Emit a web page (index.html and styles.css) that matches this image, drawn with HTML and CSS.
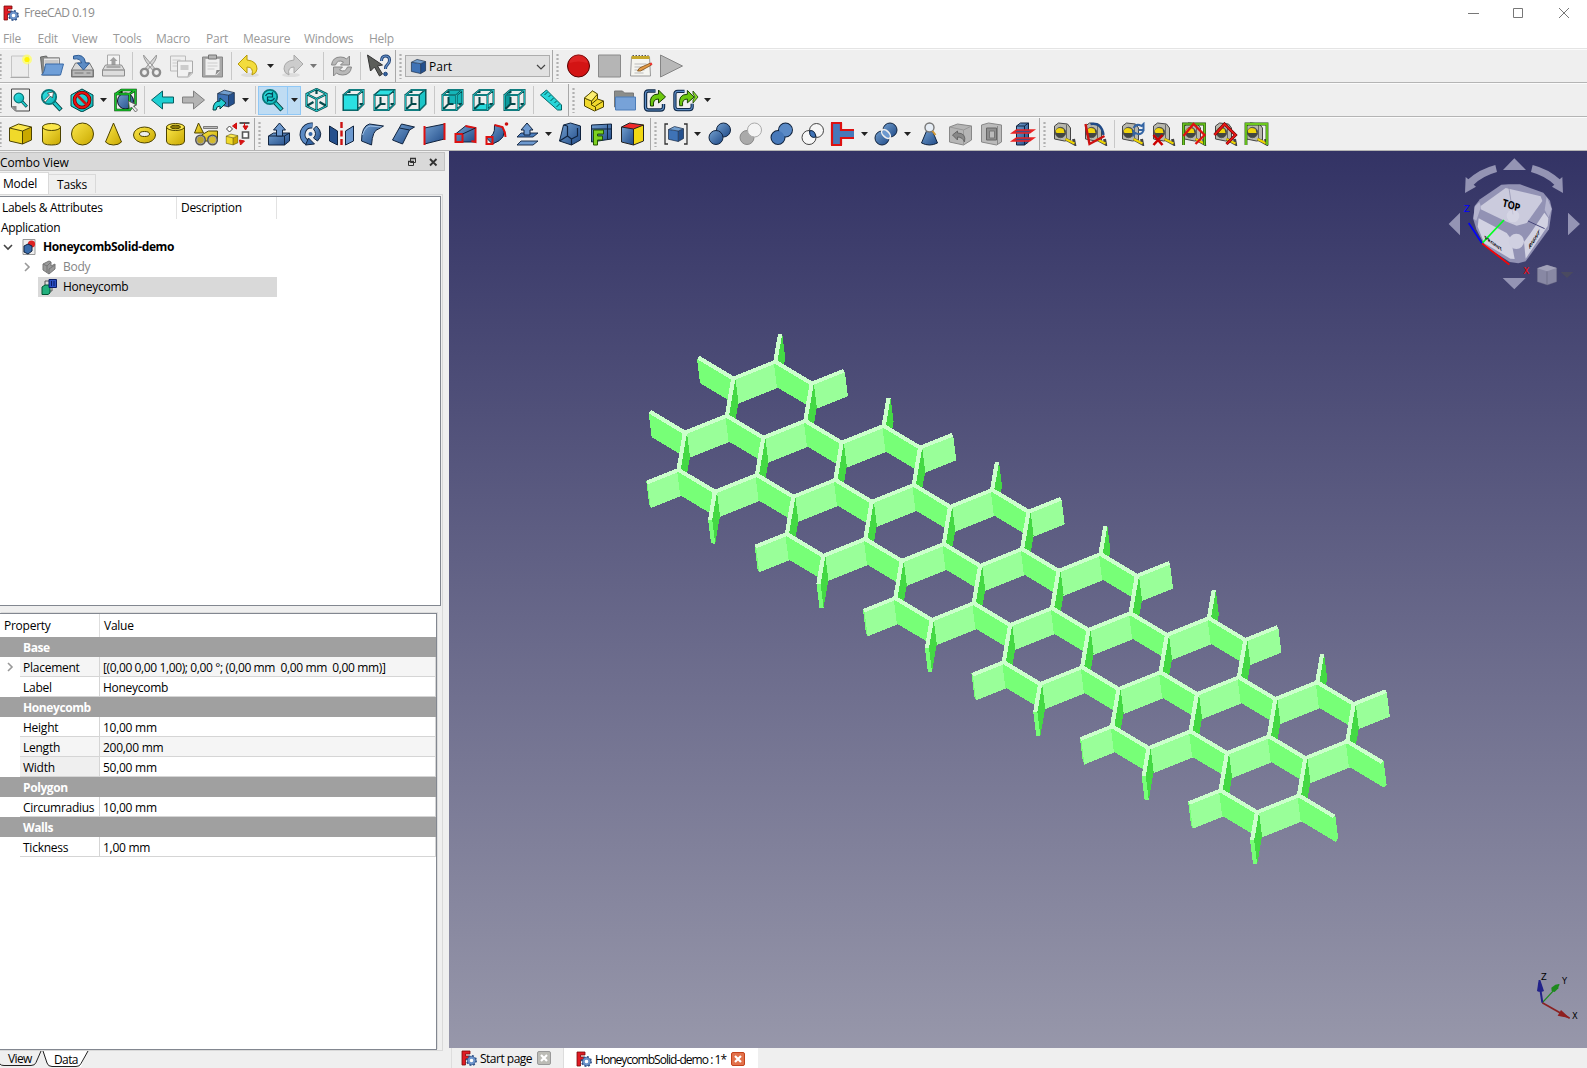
FILE: index.html
```html
<!DOCTYPE html>
<html lang="en">
<head>
<meta charset="utf-8">
<title>FreeCAD 0.19</title>
<link rel="stylesheet" href="styles.css">
</head>
<body>
<svg class="defs" width="0" height="0">
<defs>
<linearGradient id="gB" x1="0" y1="0" x2="1" y2="1"><stop offset="0" stop-color="#729fcf"/><stop offset="1" stop-color="#204a87"/></linearGradient>
<linearGradient id="gY" x1="0" y1="0" x2="1" y2="1"><stop offset="0" stop-color="#fbe74b"/><stop offset="1" stop-color="#c9a800"/></linearGradient>
<linearGradient id="gT" x1="0" y1="0" x2="1" y2="1"><stop offset="0" stop-color="#34e5e7"/><stop offset="1" stop-color="#0bb2b5"/></linearGradient>
<linearGradient id="gG" x1="0" y1="0" x2="1" y2="1"><stop offset="0" stop-color="#d2d2d2"/><stop offset="1" stop-color="#909090"/></linearGradient>
<linearGradient id="gS" x1="0" y1="0" x2="0" y2="1"><stop offset="0" stop-color="#333365"/><stop offset="1" stop-color="#9797aa"/></linearGradient>
</defs>
<symbol id="logo" viewBox="0 0 16 16"><path d="M1 1h8v3H4.500v2H8v3H4.500v6H1z" fill="#e01b24" stroke="#7a0a0a" stroke-width=".8"/><circle cx="10.500" cy="10.500" r="4.700" fill="none" stroke="#2b4f86" stroke-width="1.600" stroke-dasharray="1.845 1.845"/><circle cx="10.500" cy="10.500" r="3" fill="none" stroke="#6d95cc" stroke-width="2.400"/><circle cx="10.500" cy="10.500" r="4.200" fill="none" stroke="#2b4f86" stroke-width=".7"/><circle cx="10.500" cy="10.500" r="1.400" fill="#fff"/></symbol>
<symbol id="new" viewBox="0 0 24 24"><path d="M3 2h17v21H3z" fill="#ececec" stroke="#c4c4c4"/><path d="M2 23.500h19" stroke="#aaa"/><circle cx="18.500" cy="5.500" r="5" fill="#ffff66" opacity=".75"/><circle cx="18.500" cy="5.500" r="2.600" fill="#fff200"/></symbol>
<symbol id="open" viewBox="0 0 24 24"><path d="M1 3l6-1 1 2h12v17H3z" fill="#8a8c88" stroke="#666"/><path d="M4 4h16v9H4z" fill="#e8e8e8" stroke="#888"/><path d="M5 7h14M5 9h14" stroke="#aaa"/><path d="M6 10h18l-3 11H2q3-2 4-11z" fill="#6f9fd8" stroke="#3a6ba8"/></symbol>
<symbol id="save" viewBox="0 0 24 24"><path d="M5 9h14l4 7v7H1v-7z" fill="#d8d8d8" stroke="#777"/><path d="M1.500 16h21v6.500h-21z" fill="#b9b9b9" stroke="#777"/><path d="M4 19h9M16 19h4" stroke="#777"/><path d="M3 2q11-3 12 7h4l-6 7-6-7h4q-1-5-8-4z" fill="#5b8bc4" stroke="#2c5a94"/></symbol>
<symbol id="print" viewBox="0 0 24 24"><path d="M6 1h12v12H6z" fill="#f4f4f4" stroke="#aaa"/><path d="M12 3l4 4h-2v4h-4V7H8z" fill="#a0a0a0"/><path d="M4 11h16l3 5v6H1v-6z" fill="#ddd" stroke="#8c8c8c"/><path d="M1 16h22M5 13h14" stroke="#999" stroke-width="1.500"/></symbol>
<symbol id="cut" viewBox="0 0 24 24"><path d="M5 1q0 5 9 15l2-2zM18 1q1 5-9 15l-2-2z" fill="#d4d4d4" stroke="#999"/><circle cx="6" cy="18.500" r="3.600" fill="none" stroke="#8c8c8c" stroke-width="2.400"/><circle cx="18" cy="18.500" r="3.600" fill="none" stroke="#8c8c8c" stroke-width="2.400"/></symbol>
<symbol id="copy" viewBox="0 0 24 24"><path d="M1 2h15v15H1z" fill="#eee" stroke="#bbb"/><path d="M3 6h8M3 9h6M3 12h6" stroke="#ccc"/><path d="M8 7h15v12l-4 4H8z" fill="#f2f2f2" stroke="#aaa"/><path d="M11 11h8v5h-8z" fill="#ccc"/><path d="M18 23l1-5h4z" fill="#aaa"/></symbol>
<symbol id="paste" viewBox="0 0 24 24"><path d="M2 3h20v20H2z" fill="#a9a9a9" stroke="#888"/><path d="M5 5h14v13l-3 3H5z" fill="#f0f0f0"/><path d="M7 9h10M7 12h10M7 15h7" stroke="#ccc"/><path d="M8 1h8v4H8z" fill="#b5b5b5" stroke="#777"/><path d="M15 21l1-5h4z" fill="#888"/></symbol>
<symbol id="undo" viewBox="0 0 24 24"><ellipse cx="13" cy="21" rx="9" ry="2" fill="#ddd"/><path d="M1 10l9-9v5q10 1 10 9 0 4-5 6 2-8-5-8v6z" fill="#f3dc3c" stroke="#b79a0a"/></symbol>
<symbol id="redo" viewBox="0 0 24 24"><ellipse cx="11" cy="21" rx="9" ry="2" fill="#ddd"/><path d="M23 10l-9-9v5q-10 1-10 9 0 4 5 6-2-8 5-8v6z" fill="#ccc" stroke="#a8a8a8"/></symbol>
<symbol id="refresh" viewBox="0 0 24 24"><path d="M2 11q1-8 9-8 4 0 6 2l3-3v9h-9l3-3q-6-3-8 3zM22 13q-1 8-9 8-4 0-6-2l-3 3v-9h9l-3 3q6 3 8-3z" fill="#b9b9b9" stroke="#888"/></symbol>
<symbol id="what" viewBox="0 0 24 24"><path d="M1 1l3 16 4-4 5 9 3-2-5-8 5-1z" fill="#5c5e5a" stroke="#333"/><path d="M15 7q0-5 4-5 4 0 4 4 0 3-2 4.500T19 15" fill="none" stroke="#1c3f73" stroke-width="3"/><path d="M15 7q0-5 4-5 4 0 4 4 0 3-2 4.500T19 15" fill="none" stroke="#6d97cd" stroke-width="1.200"/><circle cx="19" cy="20" r="1.800" fill="#3465a4" stroke="#1c3f73"/></symbol>
<symbol id="cube" viewBox="0 0 24 24"><path d="M2 6l13 2v14L2 19z" fill="#3f73b6"/><path d="M15 8l7-3v13l-7 4z" fill="#24508d"/><path d="M2 6l8-4 12 3-7 3z" fill="#729fcf"/><path d="M2 6l8-4 12 3v13l-7 4-13-3zM2 6l13 2 7-3M15 8v14" fill="none" stroke="#10233e" stroke-width=".9"/></symbol>
<symbol id="ycube" viewBox="0 0 24 24"><path d="M1 6l13 3v13L1 19z" fill="#f0d92a"/><path d="M14 9l9-4v13l-9 4z" fill="#c9a800"/><path d="M1 6l9-4 13 3-9 4z" fill="#fce94f"/><path d="M1 6l9-4 13 3v13l-9 4-13-3zM1 6l13 3 9-4M14 9v13" fill="none" stroke="#4d4300"/></symbol>
<symbol id="rec" viewBox="0 0 24 24"><circle cx="12" cy="12" r="11" fill="#d31414" stroke="#500"/><path d="M3 9a9 9 0 0 1 18 0q-9-3-18 0z" fill="#f04040" opacity=".35"/></symbol>
<symbol id="stop" viewBox="0 0 24 24"><path d="M1 1h22v22H1z" fill="#b5b5b5" stroke="#8a8a8a"/></symbol>
<symbol id="note" viewBox="0 0 24 24"><path d="M3 3h18l1 19H2z" fill="#f5f5f0" stroke="#999"/><path d="M3 2h18v3H3z" fill="#c6a82a"/><path d="M4 1.500h16" stroke="#555" stroke-dasharray="1.500 1.500"/><path d="M6 10h12M6 13h8M6 16h10M6 19h9" stroke="#bbb"/><path d="M9 17l2-3L22 9l1 2-11 6z" fill="#e39a45" stroke="#7a4a10" stroke-width=".8"/><path d="M21 9.500l2-1 1 2-2 1z" fill="#e33"/></symbol>
<symbol id="play" viewBox="0 0 24 24"><path d="M1 1l22 11L1 23z" fill="#b8b8b8" stroke="#858585"/></symbol>
<symbol id="mag" viewBox="0 0 24 24"><path d="M14 14l7.500 8" stroke="#03393a" stroke-width="4.500"/><path d="M14 14l7 7.500" stroke="#1fc8ca" stroke-width="2.600"/><circle cx="9.500" cy="9" r="7.200" fill="url(#gT)" stroke="#06787a" stroke-width="1.800"/></symbol>
<symbol id="fit" viewBox="0 0 24 24"><path d="M3 1h18v22H7l-4-4z" fill="#eee" stroke="#444"/><path d="M3 18h5v5z" fill="#888"/><use href="#mag" x="4" y="4" width="16" height="16"/></symbol>
<symbol id="fitsel" viewBox="0 0 24 24"><use href="#mag" width="24" height="24"/><path d="M4 13l6-6-2-2 6-1-1 6-2-2-5 6z" fill="#fff" stroke="#333" stroke-width=".7"/></symbol>
<symbol id="draw" viewBox="0 0 24 24"><path d="M1 7l11-6 11 6v11l-11 6-11-6z" fill="url(#gT)" stroke="#044"/><circle cx="12" cy="12" r="7.500" fill="none" stroke="#600" stroke-width="3.600"/><circle cx="12" cy="12" r="7.500" fill="none" stroke="#e11" stroke-width="2.200"/><path d="M7 7l10 10" stroke="#c11" stroke-width="2.600"/></symbol>
<symbol id="bbox" viewBox="0 0 24 24"><circle cx="12" cy="13" r="8" fill="url(#gB)" stroke="#112"/><path d="M2 6h14v16H2zM2 6l6-4h14v14l-6 6M16 6l6-4M8 2v5" fill="none" stroke="#053b05" stroke-width="2.400"/><path d="M2 6h14v16H2zM2 6l6-4h14v14l-6 6M16 6l6-4" fill="none" stroke="#17c52c" stroke-width="1.300"/><path d="M15 13l1 8 2-2 4 5 2-2-4-4 3-1z" fill="#eee" stroke="#555" stroke-width=".8"/></symbol>
<symbol id="back" viewBox="0 0 24 24"><path d="M1 12L12 3v6h11v6H12v6z" fill="#1ecfd2" stroke="#065f61"/></symbol>
<symbol id="fwd" viewBox="0 0 24 24"><path d="M23 12L12 3v6H1v6h11v6z" fill="#b4b4b4" stroke="#808080"/></symbol>
<symbol id="link" viewBox="0 0 24 24"><use href="#cube" x="4" y="0" width="20" height="21"/><path d="M1 22q0-9 7-9v-3l6 5-6 6v-3q-4 0-4 4z" fill="#22cfd2" stroke="#053f40"/></symbol>
<symbol id="sync" viewBox="0 0 24 24"><use href="#mag" width="24" height="24"/><path d="M5 8q2-4 6-2l1-1v4H8M14 10q-2 4-6 2l-1 1v-4h4" fill="none" stroke="#045" stroke-width="1.200"/></symbol>
<symbol id="iso" viewBox="0 0 24 24"><path d="M12 1l10 5v12l-10 5-10-5V6zM2 6l10 5 10-5M12 11v12M12 1v5M2 18l7-4M22 18l-7-4" fill="none" stroke="#064a4c" stroke-width="2.200"/><path d="M12 1l10 5v12l-10 5-10-5V6zM2 6l10 5 10-5M12 11v12" fill="none" stroke="#2bd4d6" stroke-width=".8"/></symbol>
<symbol id="wire" viewBox="0 0 24 24"><path d="M2 7h14v15H2zM2 7l6-5h14v14l-6 6M16 7l6-5M8 2v3M8 9v7h5M18 16h4M8 16l-6 6" fill="none" stroke="#06494b" stroke-width="2"/><path d="M2 7h14v15H2zM2 7l6-5h14v14l-6 6M16 7l6-5" fill="none" stroke="#24ced1" stroke-width=".8"/></symbol>
<symbol id="vf" viewBox="0 0 24 24"><use href="#wire" width="24" height="24"/><path d="M2 7h14v15H2z" fill="#2be0e2" stroke="#06585a"/></symbol>
<symbol id="vt" viewBox="0 0 24 24"><use href="#wire" width="24" height="24"/><path d="M2 7l6-5h14l-6 5z" fill="#2be0e2" stroke="#06585a"/></symbol>
<symbol id="vr" viewBox="0 0 24 24"><use href="#wire" width="24" height="24"/><path d="M16 7l6-5v14l-6 6z" fill="#1bc5c8" stroke="#06585a"/></symbol>
<symbol id="vk" viewBox="0 0 24 24"><path d="M8 2h14v14H8z" fill="#15b5b8"/><use href="#wire" width="24" height="24"/></symbol>
<symbol id="vb" viewBox="0 0 24 24"><path d="M2 22l6-6h14l-6 6z" fill="#28dadc"/><use href="#wire" width="24" height="24"/></symbol>
<symbol id="vl" viewBox="0 0 24 24"><path d="M2 7l6-5v14l-6 6z" fill="#0d9a9c"/><use href="#wire" width="24" height="24"/></symbol>
<symbol id="ruler" viewBox="0 0 24 24"><path d="M1 7l6-5 15 15v5h-4z" fill="#26d5d8" stroke="#066"/><path d="M8 4l-3 3M11 7l-2 2M14 10l-3 3M17 13l-2 2M20 16l-3 3" stroke="#055"/></symbol>
<symbol id="part" viewBox="0 0 24 24"><path d="M3 10l8-7 5 3v5l6 2v6l-9 4-10-5z" fill="#f1d92c" stroke="#4d4300"/><path d="M3 10l7 3v4l4 2v4M10 13l6-7M14 18l8-5M10 16l6-5" fill="none" stroke="#4d4300"/><path d="M3 10l8-7 5 3-6 7z" fill="#fcee70" stroke="#4d4300" stroke-width=".8"/></symbol>
<symbol id="folder" viewBox="0 0 24 24"><path d="M2 3h8l2 2h9v14H2z" fill="#8b8d8a" stroke="#777"/><path d="M3 9h20v13H3z" fill="#77a2d8" stroke="#4d7db8"/></symbol>
<symbol id="exp" viewBox="0 0 24 24"><path d="M12 3H5Q2 3 2 6v13q0 3 3 3h12q3 0 3-3v-3" fill="none" stroke="#0d2747" stroke-width="3.400"/><path d="M12 3H5Q2 3 2 6v13q0 3 3 3h12q3 0 3-3v-3" fill="none" stroke="#5f8fc7" stroke-width="1.200"/><path d="M7 18q-2-12 8-12V2l7 7-7 6v-4q-6 0-5 7z" fill="#6cc80e" stroke="#173d02"/></symbol>
<symbol id="expl" viewBox="0 0 26 24"><use href="#exp" width="23" height="24"/><path d="M20 3l5 6-5 6v-3l2-3-2-3z" fill="#8de02b" stroke="#173d02" stroke-width=".8"/></symbol>
<symbol id="cyl" viewBox="0 0 24 24"><path d="M3 5v14q0 4 9 4t9-4V5z" fill="url(#gY)" stroke="#4d4300"/><ellipse cx="12" cy="5" rx="9" ry="3.500" fill="#fbe74b" stroke="#4d4300"/></symbol>
<symbol id="sph" viewBox="0 0 24 24"><circle cx="12" cy="12" r="11" fill="url(#gY)" stroke="#4d4300"/></symbol>
<symbol id="cone" viewBox="0 0 24 24"><path d="M12 1L4 20q3 3 8 3t8-3z" fill="url(#gY)" stroke="#4d4300"/></symbol>
<symbol id="torus" viewBox="0 0 24 24"><ellipse cx="12" cy="13" rx="11" ry="8" fill="url(#gY)" stroke="#4d4300"/><ellipse cx="12" cy="12" rx="5" ry="2.500" fill="#eee" stroke="#4d4300"/></symbol>
<symbol id="tube" viewBox="0 0 24 24"><use href="#cyl" width="24" height="24"/><ellipse cx="12" cy="5" rx="5" ry="1.800" fill="#8d7a00" stroke="#4d4300"/></symbol>
<symbol id="prim" viewBox="0 0 24 24"><path d="M4 1L0 11h9z" fill="url(#gY)" stroke="#4d4300"/><path d="M9 4.500h14v2H9z" fill="#bbb" stroke="#555" stroke-width=".7"/><path d="M7 13l7-4h9v10H7z" fill="url(#gY)" stroke="#4d4300"/><circle cx="6" cy="18" r="4.500" fill="#b9a32e" stroke="#555" stroke-width="2"/><circle cx="18" cy="18" r="4.500" fill="#d4bb2e" stroke="#555" stroke-width="2"/><circle cx="6" cy="18" r="3.800" fill="none" stroke="#bbb" stroke-width=".7"/><circle cx="18" cy="18" r="3.800" fill="none" stroke="#bbb" stroke-width=".7"/></symbol>
<symbol id="build" viewBox="0 0 24 24"><use href="#ycube" x="0" y="11" width="13" height="13"/><path d="M1 7l3-3 3 3-3 3z" fill="#fff" stroke="#444"/><path d="M14 1h10" stroke="#333" stroke-width="1.600"/><path d="M17 10h6v6h-6z" fill="#fff" stroke="#555" stroke-width="1.600"/><path d="M7 4l4-3v6zM19 1v3M17.500 4h5L20 8zM14 18l5 1-4 4z" fill="#d11" stroke="#c11"/></symbol>
<symbol id="extr" viewBox="0 0 24 24"><path d="M1 14l5-3h16v8l-5 4H1z" fill="url(#gB)" stroke="#10233e"/><path d="M1 14h16v9M17 14l5-3" fill="none" stroke="#10233e"/><path d="M12 1l6 7h-3v6H9V8H6z" fill="#6d99cf" stroke="#10233e"/></symbol>
<symbol id="rev" viewBox="0 0 24 24"><path d="M14 3.500a9 9 0 0 0-5 17" fill="none" stroke="#10233e" stroke-width="6"/><path d="M14 3.500a9 9 0 0 0-5 17" fill="none" stroke="#5b8ac4" stroke-width="4.200"/><path d="M18 4q8 8 1 15l-4-3q4-4 0-9z" fill="url(#gB)" stroke="#10233e"/><path d="M7 23l3-7 6 6z" fill="#3465a4" stroke="#10233e"/><circle cx="12" cy="12" r="2" fill="#3465a4"/></symbol>
<symbol id="mir" viewBox="0 0 24 24"><path d="M0 4l8 5v14l-8-4z" fill="#24508d" stroke="#10233e"/><path d="M24 4l-8 5v14l8-4z" fill="#6d99cf" stroke="#10233e"/><path d="M12 0v24" stroke="#c11" stroke-width="2.400" stroke-dasharray="6 2.500"/></symbol>
<symbol id="fil" viewBox="0 0 24 24"><path d="M1 19Q1 4 9 2l14 2-5 3q-6 1-7 16z" fill="url(#gB)" stroke="#10233e"/><path d="M2 13q3-9 8-9l11 1" fill="none" stroke="#a8c6e8" stroke-width=".9"/></symbol>
<symbol id="cham" viewBox="0 0 24 24"><path d="M1 18L10 2l13 3-5 3-7 14z" fill="url(#gB)" stroke="#10233e"/><path d="M8 6l10 2" fill="none" stroke="#10233e"/></symbol>
<symbol id="face" viewBox="0 0 24 24"><path d="M2 6l20-4v15L2 22z" fill="url(#gB)" stroke="#10233e"/><path d="M2 4v19M22 1v17" stroke="#d11" stroke-width="2"/></symbol>
<symbol id="loft" viewBox="0 0 24 24"><path d="M2 12l10-8 10 2v14L9 20H2z" fill="url(#gB)" stroke="#10233e"/><path d="M2 12h7v8H2zM12 4l10 2v14l-4-1" fill="none" stroke="#d11" stroke-width="2"/><path d="M9 12l13-6" stroke="#10233e"/></symbol>
<symbol id="sweep" viewBox="0 0 24 24"><path d="M2 16q9-1 8-13l8 2q6 11-10 17z" fill="url(#gB)" stroke="#10233e"/><path d="M2 15h6v7H2zM10 3l8 2q3 5 3 10" fill="none" stroke="#d11" stroke-width="2"/><circle cx="22" cy="2" r="1.800" fill="#c11"/></symbol>
<symbol id="off" viewBox="0 0 24 24"><path d="M2 23l4-4h17l-5 4z" fill="#6d99cf" stroke="#10233e" stroke-width=".9"/><path d="M2 15l4-4h17l-5 4z" fill="#4a7dbd" stroke="#10233e" stroke-width=".9"/><path d="M12 1l6 7h-3v5H9V8H6z" fill="#6d99cf" stroke="#10233e"/></symbol>
<symbol id="thick" viewBox="0 0 24 24"><path d="M1 19L5 3l7-2 10 3v14l-9 5z" fill="url(#gB)" stroke="#10233e"/><path d="M9 4v10l4 3 6-3V6M13 17v6M5 3l4 1M9 14l-8 5" fill="none" stroke="#10233e" stroke-width="1.200"/></symbol>
<symbol id="proj" viewBox="0 0 24 24"><path d="M2 3l20-1v15l-20 3z" fill="url(#gB)" stroke="#10233e"/><path d="M2 7h20M18 2v16" stroke="#10233e"/><path d="M4 8h10v4H8v2h5v4H8v5H4z" fill="#7ed321" stroke="#245502"/></symbol>
<symbol id="color" viewBox="0 0 24 24"><path d="M1 5h12v18L1 20z" fill="url(#gB)"/><path d="M13 6l10-4v17l-10 4z" fill="#f2d814"/><path d="M1 5l8-4 14 2-10 4z" fill="#ef2929"/><path d="M1 5l8-4 14 2v16l-10 4-12-3zM1 5l12 2 10-4M13 7v16" fill="none" stroke="#222"/></symbol>
<symbol id="comp" viewBox="0 0 24 24"><use href="#cube" x="3" y="3" width="18" height="18"/><path d="M4 2H1v20h3M20 2h3v20h-3" fill="none" stroke="#333" stroke-width="1.300"/></symbol>
<symbol id="bool" viewBox="0 0 24 24"><circle cx="16" cy="8" r="7" fill="url(#gB)" stroke="#10233e"/><circle cx="8.500" cy="15.500" r="7" fill="url(#gB)" stroke="#10233e"/></symbol>
<symbol id="bcut" viewBox="0 0 24 24"><circle cx="8.500" cy="15.500" r="7" fill="#aaa" stroke="#888"/><circle cx="16" cy="8" r="7" fill="#f4f4f4" stroke="#aaa"/></symbol>
<symbol id="fuse" viewBox="0 0 24 24"><g stroke="#10233e" stroke-width="2"><circle cx="16" cy="8" r="6.500"/><circle cx="8.500" cy="15.500" r="6.500"/></g><circle cx="16" cy="8" r="6.500" fill="#5a8ac6"/><circle cx="8.500" cy="15.500" r="6.500" fill="#4779ba"/></symbol>
<symbol id="com" viewBox="0 0 24 24"><g fill="#f6f6f6" stroke="#444"><circle cx="16" cy="8.500" r="7"/><circle cx="8.500" cy="15.500" r="7"/></g><path d="M9 9q5-2 6.500 6Q9 17 9 9z" fill="#3f73b6" stroke="#10233e"/></symbol>
<symbol id="join" viewBox="0 0 24 24"><path d="M1 1h9v22H1zM10 8h13v8H10z" fill="#4779ba"/><path d="M1 1v22M0 1h11M0 23h11M10 1v7h13M10 23v-7h13" fill="none" stroke="#d11" stroke-width="2.200"/></symbol>
<symbol id="split" viewBox="0 0 24 24"><circle cx="16" cy="8" r="7" fill="url(#gB)" stroke="#10233e"/><circle cx="8" cy="16" r="7" fill="url(#gB)" stroke="#10233e"/><ellipse cx="12" cy="12" rx="3" ry="5.500" transform="rotate(-45 12 12)" fill="#6d99cf" stroke="#eee" stroke-width="1.500"/></symbol>
<symbol id="check" viewBox="0 0 24 24"><path d="M9 9L4 21q8 4 16 0L15 9z" fill="url(#gB)" stroke="#10233e"/><circle cx="12" cy="5.500" r="4.500" fill="#e6edf5" stroke="#777" stroke-width="1.400"/><path d="M15 9l3 4" stroke="#d39b3a" stroke-width="2"/></symbol>
<symbol id="def" viewBox="0 0 24 24"><path d="M1 5l8-3 14 2v14l-8 5-14-3z" fill="#b5b5b5" stroke="#888"/><path d="M1 5l14 3 8-4M15 8v15" fill="none" stroke="#999"/><path d="M4 13l5-4v2q9 0 7 9-2-5-7-5v3z" fill="#888" stroke="#666"/></symbol>
<symbol id="imp" viewBox="0 0 24 24"><path d="M2 3l7-2 13 2v17l-5 3-15-3z" fill="#bbb" stroke="#888"/><path d="M7 6h10v12H7z" fill="#8e8e8e" stroke="#666"/><path d="M10 9h5v7h-5z" fill="#bbb" stroke="#777"/><path d="M18 4v19" stroke="#888"/></symbol>
<symbol id="sect" viewBox="0 0 24 24"><path d="M6 4l4-3h8v19l-4 3H6z" fill="url(#gB)" stroke="#10233e"/><path d="M6 4h8v19M14 4l4-3" fill="none" stroke="#10233e"/><path d="M2 11l4-3h17l-4 3zM2 19l4-3h17l-4 3z" fill="#4a4a80" stroke="#e22" stroke-width="1.700"/></symbol>
<symbol id="tape" viewBox="0 0 24 24"><path d="M2 4l4-3 9 1 3 4v12l-6 1-10-2z" fill="#b8b8ae" stroke="#444"/><path d="M14 2.500v16" stroke="#666"/><circle cx="8" cy="10.500" r="5.200" fill="#43463f" stroke="#555"/><path d="M3 9q2-5 8-2l1 4H4z" fill="#f0d50c"/><path d="M13 17l9 5-1-5" fill="none" stroke="#444" stroke-width="3"/><path d="M13 17l9 4.500" stroke="#edd400" stroke-width="2"/></symbol>
<symbol id="mang" viewBox="0 0 24 24"><use href="#tape" width="24" height="24"/><path d="M7 2q11-2 13 11" fill="none" stroke="#204a87" stroke-width="2.400"/><path d="M2 2l4 20 15-8" fill="none" stroke="#c11" stroke-width="2.400"/></symbol>
<symbol id="mref" viewBox="0 0 24 24"><use href="#tape" width="24" height="24"/><path d="M13 6q3-5 8-2l2-2v6h-5M23 9q-3 5-8 2l-2 2V8" fill="none" stroke="#3465a4" stroke-width="2"/></symbol>
<symbol id="mclr" viewBox="0 0 24 24"><use href="#tape" width="24" height="24"/><path d="M2 13l9 10M11 13L2 23" stroke="#c00" stroke-width="2.600"/></symbol>
<symbol id="m3" viewBox="0 0 24 24"><use href="#tape" width="24" height="24"/><path d="M1 23V2h21v21" fill="none" stroke="#1d4d04" stroke-width="2.800"/><path d="M1 23V2h21v21" fill="none" stroke="#6cc81e" stroke-width="1.600"/><path d="M1 14L11 2l11 11-9 9" fill="none" stroke="#d11" stroke-width="2.300"/></symbol>
<symbol id="mdel" viewBox="0 0 24 24"><use href="#tape" width="24" height="24"/><path d="M1 13L11 2l11 11-9 9" fill="none" stroke="#500" stroke-width="3"/><path d="M1 13L11 2l11 11-9 9" fill="none" stroke="#e21515" stroke-width="2"/></symbol>
<symbol id="mdl" viewBox="0 0 24 24"><use href="#tape" width="24" height="24"/><path d="M1.500 23V2h21v21" fill="none" stroke="#1d4d04" stroke-width="2.800"/><path d="M1.500 23V2h21v21" fill="none" stroke="#6cc81e" stroke-width="1.800"/></symbol>
<symbol id="arr" viewBox="0 0 7 4"><path d="M0 0h7L3.500 4z"/></symbol>
</svg>

<header class="titlebar">
  <svg class="logo"><use href="#logo"/></svg><span class="apptitle">FreeCAD 0.19</span>
  <svg class="winbtns" viewBox="0 0 120 24"><path d="M1 12.500h11M46.500 7.500h9v9h-9zM92 7l10 10M102 7l-10 10" fill="none" stroke="#777"/></svg>
</header>
<nav class="menubar"><span>File</span><span>Edit</span><span>View</span><span>Tools</span><span>Macro</span><span>Part</span><span>Measure</span><span>Windows</span><span>Help</span></nav>

<section class="bar">
  <div class="group first"><i class="grip"></i>
    <svg class="i"><use href="#new"/></svg><svg class="i"><use href="#open"/></svg><svg class="i"><use href="#save"/></svg><svg class="i"><use href="#print"/></svg><i class="sep"></i>
    <svg class="i"><use href="#cut"/></svg><svg class="i"><use href="#copy"/></svg><svg class="i"><use href="#paste"/></svg><i class="sep"></i>
    <div class="drop"><svg class="i"><use href="#undo"/></svg><svg class="a"><use href="#arr"/></svg></div>
    <div class="drop off"><svg class="i"><use href="#redo"/></svg><svg class="a"><use href="#arr"/></svg></div><i class="sep"></i>
    <svg class="i"><use href="#refresh"/></svg><i class="sep"></i><svg class="i"><use href="#what"/></svg>
  </div>
  <div class="group"><i class="grip"></i><div class="combo"><svg class="ci"><use href="#cube"/></svg><span>Part</span><svg class="chev" viewBox="0 0 10 6"><path d="M1 1l4 4 4-4" fill="none" stroke="#444" stroke-width="1.200"/></svg></div></div>
  <div class="group last macro"><i class="grip"></i><svg class="i"><use href="#rec"/></svg><svg class="i"><use href="#stop"/></svg><svg class="i"><use href="#note"/></svg><svg class="i"><use href="#play"/></svg></div>
</section>
<section class="bar">
  <div class="group first"><i class="grip"></i>
    <svg class="i"><use href="#fit"/></svg><svg class="i"><use href="#fitsel"/></svg>
    <div class="drop"><svg class="i"><use href="#draw"/></svg><svg class="a"><use href="#arr"/></svg></div>
    <svg class="i"><use href="#bbox"/></svg><i class="sep"></i><svg class="i"><use href="#back"/></svg><svg class="i"><use href="#fwd"/></svg>
    <div class="drop"><svg class="i"><use href="#link"/></svg><svg class="a"><use href="#arr"/></svg></div><i class="sep"></i>
    <div class="drop on"><svg class="i"><use href="#sync"/></svg><svg class="a"><use href="#arr"/></svg></div>
    <svg class="i"><use href="#iso"/></svg><i class="sep"></i>
    <svg class="i"><use href="#vf"/></svg><svg class="i"><use href="#vt"/></svg><svg class="i"><use href="#vr"/></svg><i class="sep"></i>
    <svg class="i"><use href="#vk"/></svg><svg class="i"><use href="#vb"/></svg><svg class="i"><use href="#vl"/></svg><i class="sep"></i><svg class="i"><use href="#ruler"/></svg>
  </div>
  <div class="group last"><i class="grip"></i><svg class="i"><use href="#part"/></svg><svg class="i"><use href="#folder"/></svg><svg class="i"><use href="#exp"/></svg><div class="drop"><svg class="i"><use href="#expl"/></svg><svg class="a"><use href="#arr"/></svg></div></div>
</section>
<section class="bar">
  <div class="group first"><i class="grip"></i><svg class="i"><use href="#ycube"/></svg><svg class="i"><use href="#cyl"/></svg><svg class="i"><use href="#sph"/></svg><svg class="i"><use href="#cone"/></svg><svg class="i"><use href="#torus"/></svg><svg class="i"><use href="#tube"/></svg><svg class="i"><use href="#prim"/></svg><svg class="i"><use href="#build"/></svg></div>
  <div class="group"><i class="grip"></i><svg class="i"><use href="#extr"/></svg><svg class="i"><use href="#rev"/></svg><svg class="i"><use href="#mir"/></svg><svg class="i"><use href="#fil"/></svg><svg class="i"><use href="#cham"/></svg><svg class="i"><use href="#face"/></svg><svg class="i"><use href="#loft"/></svg><svg class="i"><use href="#sweep"/></svg>
    <div class="drop"><svg class="i"><use href="#off"/></svg><svg class="a"><use href="#arr"/></svg></div>
    <svg class="i"><use href="#thick"/></svg><svg class="i"><use href="#proj"/></svg><svg class="i"><use href="#color"/></svg></div>
  <div class="group bools"><i class="grip"></i>
    <div class="drop"><svg class="i"><use href="#comp"/></svg><svg class="a"><use href="#arr"/></svg></div>
    <svg class="i"><use href="#bool"/></svg><svg class="i"><use href="#bcut"/></svg><svg class="i"><use href="#fuse"/></svg><svg class="i"><use href="#com"/></svg>
    <div class="drop"><svg class="i"><use href="#join"/></svg><svg class="a"><use href="#arr"/></svg></div>
    <div class="drop"><svg class="i"><use href="#split"/></svg><svg class="a"><use href="#arr"/></svg></div>
    <svg class="i"><use href="#check"/></svg><svg class="i"><use href="#def"/></svg><svg class="i"><use href="#imp"/></svg><svg class="i"><use href="#sect"/></svg></div>
  <div class="group last"><i class="grip"></i><svg class="i"><use href="#tape"/></svg><svg class="i"><use href="#mang"/></svg><i class="sep"></i><svg class="i"><use href="#mref"/></svg><svg class="i"><use href="#mclr"/></svg><svg class="i"><use href="#m3"/></svg><svg class="i"><use href="#mdel"/></svg><svg class="i"><use href="#mdl"/></svg></div>
</section>

<main class="main">
  <aside class="side">
    <div class="docktitle"><span>Combo View</span><svg viewBox="0 0 34 12"><path d="M4.500 1.500h5v4h-5zM2.500 4.500h5v4h-5z" fill="#d9d9d9" stroke="#333"/><path d="M4 1.500h6M2 4.500h6" stroke="#333" stroke-width="1.500"/><path d="M24 2l6.500 6.500M30.500 2L24 8.500" stroke="#333" stroke-width="1.800"/></svg></div>
    <div class="tabs"><span class="tab active">Model</span><span class="tab">Tasks</span></div>
    <div class="pane">
      <div class="tree">
        <div class="treehead"><span>Labels &amp; Attributes</span><span>Description</span></div>
        <div class="trow app"><span>Application</span></div>
        <div class="trow doc"><svg class="tw" viewBox="0 0 10 10"><path d="M1 3l4 4 4-4" fill="none" stroke="#444" stroke-width="1.600"/></svg>
          <svg class="ti" viewBox="0 0 16 16"><path d="M2 .5h12v15H2z" fill="#eee" stroke="#999"/><circle cx="10.500" cy="5" r="3.600" fill="#d22"/><path d="M3 7l4-2 4 2v5l-4 3-4-2z" fill="#3a6cab" stroke="#10233e"/></svg><b>HoneycombSolid-demo</b></div>
        <div class="trow body"><svg class="tw" viewBox="0 0 10 10"><path d="M3 1l4 4-4 4" fill="none" stroke="#999" stroke-width="1.600"/></svg>
          <svg class="ti" viewBox="0 0 16 16"><path d="M2 5l6-3 2 1v4l4-2v5l-6 5-6-4z" fill="#9a9a9a" stroke="#777"/><path d="M2 5l4 2v6M6 7l4-4M8 15v-5l6-4" fill="none" stroke="#777"/></svg><span>Body</span></div>
        <div class="trow comb"><div class="sel"><svg class="ti" viewBox="0 0 16 16"><path d="M4 2h7v10H4z" fill="#ddd" stroke="#555"/><path d="M1 8l3-2h5v8l-2 1.500H1z" fill="#22b07d" stroke="#053"/><path d="M8 .5h7.500v8H8z" fill="#2a4fc4" stroke="#0a1c66"/><path d="M10.500 2v5M13 2v5" stroke="#0a1c66"/></svg><span>Honeycomb</span></div></div>
      </div>
      <div class="props">
        <div class="ph"><span>Property</span><span>Value</span></div>
        <div class="cat">Base</div>
        <div class="pr alt"><svg class="tw" viewBox="0 0 10 10"><path d="M3 1l4 4-4 4" fill="none" stroke="#999" stroke-width="1.600"/></svg><span>Placement</span><span class="val long">[(0,00 0,00 1,00); 0,00 °; (0,00 mm&nbsp; 0,00 mm&nbsp; 0,00 mm)]</span></div>
        <div class="pr"><i></i><span>Label</span><span class="val">Honeycomb</span></div>
        <div class="cat">Honeycomb</div>
        <div class="pr"><i></i><span>Height</span><span class="val">10,00 mm</span></div>
        <div class="pr alt"><i></i><span>Length</span><span class="val">200,00 mm</span></div>
        <div class="pr hov"><i></i><span>Width</span><span class="val">50,00 mm</span></div>
        <div class="cat">Polygon</div>
        <div class="pr"><i></i><span class="tight">Circumradius</span><span class="val">10,00 mm</span></div>
        <div class="cat">Walls</div>
        <div class="pr"><i></i><span>Tickness</span><span class="val">1,00 mm</span></div>
      </div>
    </div>
    <div class="btabs">
      <svg viewBox="0 0 96 17"><path d="M44 0l4 12q1 4 5 4h28l6-16z" fill="#fff"/><path d="M0 13q1 1.500 4 1.500h27q4 0 5-3L41 0M43 0l4 12q1 3.500 5 3.500h24q4 0 5-3L88 0" fill="none" stroke="#222"/></svg>
      <span>View</span><span>Data</span>
    </div>
  </aside>
  <section class="view">
    <svg class="scene" viewBox="0 0 1138 897">
      <rect width="1138" height="897" fill="url(#gS)"/>
      <g id="comb" shape-rendering="crispEdges"></g>
      <g transform="translate(981 -1) scale(.33333)">
        <g fill="#9494b4"><path d="M253 25l35 35h-69zM253 418l34-34h-69zM56 222l34-34v68zM450 222l-36-34v68zM196 45l5 21q-43 12-70 38l7 6-33 19 2-48 8 7q34-31 81-43zM308 45l-5 21q43 12 70 38l-7 6 33 19-2-48-8 7q-34-31-81-43z"/></g>
        <path d="M236 103h34l70 25 20 24 6 26-9 60-70 96-22 6-26-4-74-48-26-50-9-30 4-40 16-20 64-44z" fill="#9292b4"/>
        <path d="M152 168l75-54 105 25 5 14-47 66-30 8-30-12-78-37z" fill="#cbcbdd"/>
        <path d="M236 108l13 85" stroke="#8c8caa" stroke-width="2"/>
        <path d="M146 205l84 44 12 16 12 62-13-1-78-46-20-50z" fill="#d2d2e2"/><path d="M343 188l12 16-2 24-66 98-5-50 18-24z" fill="#d2d2e2"/>
        <path d="M130 206l4-36 14-14 5 14-14 42zM350 140l15 36-9 26-12-22z" fill="#b4b4ce"/>
        <circle cx="259" cy="274" r="23" fill="#d0d0e1"/><circle cx="249" cy="198" r="19" fill="#dcdcea" opacity=".6"/><path d="M294 213l50 23" stroke="#444478" stroke-width="3"/>
        <path d="M222 210l-66 70" stroke="#00ff20" stroke-width="5"/><path d="M116 219l40 61" stroke="#0000ff" stroke-width="5"/><path d="M156 280l82 64" stroke="#ff0000" stroke-width="5"/>
        <text class="cubetop" transform="matrix(.9 .28 -.2 1.05 216 169)">TOP</text>
        <text class="cubeside" transform="matrix(.82 .6 .3 .9 166 268)">FRONT</text>
        <text class="cubeside" transform="matrix(.55 -.84 .1 1 298 299)">RIGHT</text>
        <text class="cz" x="101" y="185">Z</text><text class="cx" x="280" y="371">X</text>
        <path d="M322 355l29-10 29 9v41l-28 10-30-10z" fill="#8888a4" stroke="#66667f"/><path d="M322 355l29 9 29-10-29-9z" fill="#a2a2ba"/><path d="M351 364v41" stroke="#66667f" stroke-width="2"/>
        <path d="M392 366h38l-19 18z" fill="#4a4a60"/>
      </g>
      <g transform="translate(1051 799) scale(.33333)">
        <path d="M127 158l51-55" stroke="#1d8a1d" stroke-width="4"/><path d="M154 113l12-9 11-2-2 13-11 11-9-3z" fill="#1d8a1d"/>
        <path d="M127 158l82 47" stroke="#8a2222" stroke-width="5"/><path d="M173 197l10-17 27 25z" fill="#8f1f1f"/>
        <path d="M127 158l-9-60" stroke="#222288" stroke-width="6"/><path d="M116 90l5 0 11 33q-12 5-21 0z" fill="#22228a"/>
        <text class="ax" x="123" y="89">Z</text><text class="ax" x="186" y="101">Y</text><text class="ax" x="216" y="206">X</text>
      </g>
    </svg>
    <div class="doctabs">
      <div class="dt"><svg class="logo"><use href="#logo"/></svg><span>Start page</span><svg class="x" viewBox="0 0 14 14"><rect x=".5" y=".5" width="13" height="13" rx="1.500" fill="#bcbcb6" stroke="#999"/><path d="M4 4l6 6M10 4l-6 6" stroke="#fff" stroke-width="2.200"/></svg></div>
      <div class="dt cur"><svg class="logo"><use href="#logo"/></svg><span>HoneycombSolid-demo : 1*</span><svg class="x" viewBox="0 0 14 14"><rect x=".5" y=".5" width="13" height="13" rx="1.500" fill="#e2714a" stroke="#c4421c"/><path d="M4 4l6 6M10 4l-6 6" stroke="#fff" stroke-width="2.200"/></svg></div>
    </div>
  </section>
</main>
<script src="honeycomb.js"></script>
</body>
</html>
```
FILE: styles.css
```css
* { box-sizing: border-box; }
body { margin: 0; width: 1587px; height: 1068px; overflow: hidden; background: #efefef; color: #000; font: 12px/16px "Open Sans", "Noto Sans", sans-serif; letter-spacing: -0.25px; display: flex; flex-direction: column; white-space: nowrap; }
.defs { position: absolute; }
svg { display: block; flex: none; }
.titlebar { height: 25px; flex: none; background: #fff; display: flex; align-items: center; padding-left: 3px; color: #8c8c8c; }
.logo { width: 16px; height: 16px; }
.apptitle { margin-left: 5px; flex: 1; letter-spacing: -0.4px; }
.winbtns { width: 120px; height: 24px; }
.menubar { height: 24px; flex: none; background: #fff; border-bottom: 1px solid #e4e4e4; display: flex; padding: 6px 0 0 3px; color: #999; }
.menubar span { width: 34.5px; }
.menubar span:nth-child(3) { width: 41px; }
.menubar span:nth-child(4) { width: 43px; }
.menubar span:nth-child(5) { width: 50px; }
.menubar span:nth-child(6) { width: 37px; }
.menubar span:nth-child(7) { width: 61px; }
.menubar span:nth-child(8) { width: 65px; }
.bar { height: 34px; flex: none; display: flex; border-top: 1px solid #fbfbfb; border-bottom: 1px solid #b4b4b4; }
.group { display: flex; align-items: center; padding-right: 1.5px; border-right: 1px solid #a8a8a8; }
.group.last { border: 0; }
.grip { width: 9px; height: 26px; flex: none; background: radial-gradient(circle, #b0b0b0 1px, transparent 1.3px) 3px 0 / 3px 4px repeat-y; }
.macro .grip, .bools .grip { width: 10px; }
.first .grip { width: 4.5px; background-position: -1px 0; }
.i { width: 31px; height: 24px; }
.sep { width: 6px; height: 28px; flex: none; background: linear-gradient(#c8c8c8, #c8c8c8) 3px 0 / 1px 100% no-repeat; }
.drop { display: flex; align-items: center; width: 43px; height: 29px; flex: none; }
.drop .i { width: 30px; }
.a { width: 7px; height: 4px; margin-left: 3px; fill: #222; }
.off .a { fill: #777; }
.on { background: #bfdcf3; outline: 1px solid #90c8f6; outline-offset: -1px; }
.on .i { border-right: 1px solid #90c8f6; height: 29px; padding: 2px 0 3px; }
.combo { width: 145px; height: 22px; border: 1px solid #adadad; background: #e1e1e1; display: flex; align-items: center; padding: 1px 3px 0 4px; }
.ci { width: 17px; height: 17px; }
.combo span { flex: 1; margin-left: 2px; letter-spacing: 0; }
.chev { width: 10px; height: 6px; }
.main { flex: 1; min-height: 0; display: flex; }
.side { width: 449px; flex: none; display: flex; flex-direction: column; padding-top: 1px; }
.docktitle { width: 445px; height: 19px; background: #d9d9d9; border: 1px solid #c2c2c2; border-left: 0; display: flex; justify-content: space-between; align-items: center; padding: 2px 4px 0 0; letter-spacing: -0.1px; }
.docktitle svg { width: 34px; height: 12px; }
.tabs { height: 23px; padding-top: 2px; display: flex; align-items: flex-end; }
.tab { width: 48px; height: 19px; border: 1px solid #d9d9d9; border-bottom: 0; text-align: center; line-height: 20px; margin-bottom: 1px; }
.tab.active { height: 22px; width: 49px; background: #fff; border-left: 0; margin: 0 -1px 0 0; padding-right: 8px; line-height: 22px; }
.pane { width: 443px; flex: 1; border: 1px solid #d9d9d9; border-left: 0; padding: 1px 1px 0 0; display: flex; flex-direction: column; }
.tree { height: 410px; flex: none; background: #fff; border: 1px solid #828790; border-left: 0; }
.treehead { height: 22px; display: flex; }
.treehead span { width: 177px; border-right: 1px solid #e2e2e2; padding: 3px 0 0 2px; letter-spacing: -0.3px; }
.treehead span + span { width: 100px; padding-left: 4px; }
.trow { height: 20px; display: flex; align-items: center; }
.trow.app { padding-left: 1px; height: 18px; letter-spacing: -0.3px; }
.tw { width: 10px; height: 10px; }
.ti { width: 16px; height: 16px; }
.trow.doc { padding-left: 3px; height: 19.5px; }
.doc .ti { margin: 0 6px 0 8px; }
.doc b { letter-spacing: -0.37px; }
.body { padding-left: 22px; color: #848484; }
.body .ti { margin: 0 6px 0 9px; }
.comb { padding-left: 38px; }
.sel { width: 239px; height: 20px; background: #d9d9d9; display: flex; align-items: center; padding-left: 3px; gap: 6px; }
.props { width: 437px; flex: 1; margin-top: 7px; background: #fff; border: 1px solid #828790; border-left: 0; box-shadow: 1px -1px #dcdcdc; }
.ph { height: 23px; display: flex; line-height: 24px; }
.ph span { width: 100px; padding-left: 4px; border-right: 1px solid #dedede; }
.ph span + span { border: 0; }
.cat { height: 20px; background: #a0a0a0; color: #fff; font-weight: 700; padding-left: 23px; line-height: 21px; letter-spacing: -0.4px; }
.pr { height: 20px; display: flex; line-height: 21px; }
.pr > i { width: 20px; }
.pr > .tw { width: 20px; height: 10px; margin-top: 5px; }
.pr > span { width: 80px; padding-left: 3px; border: solid #d5d5d5; border-width: 0 1px 1px 0; }
.pr > .val { flex: 1; letter-spacing: -0.27px; }
.pr > .val.long { letter-spacing: -0.38px; }
.pr > .tight { letter-spacing: -0.3px; }
.alt > span { background: #f5f5f5; }
.hov > span:not(.val) { background: #efefef; }
.btabs { height: 17px; flex: none; position: relative; display: flex; padding-left: 8px; letter-spacing: -0.6px; }
.btabs svg { position: absolute; left: 0; top: 0; width: 96px; height: 17px; }
.btabs span { position: relative; width: 46px; line-height: 16px; }
.btabs span + span { line-height: 18px; }
.view { flex: 1; display: flex; flex-direction: column; min-width: 0; }
.scene { width: 1138px; height: 897px; }
.doctabs { height: 20px; display: flex; padding-left: 2px; }
.dt { width: 112px; display: flex; align-items: center; padding: 2px 0 0 9px; gap: 3px; border-left: 1px solid #ddd; letter-spacing: -0.5px; }
.dt .logo { margin-top: -2px; }
.dt.cur { width: 195px; background: #fff; padding: 4px 0 0 12px; letter-spacing: -0.95px; }
.dt .x { width: 14px; height: 14px; margin: -2px 0 0 2px; }
.cubetop { font: 700 30px "Open Sans", sans-serif; letter-spacing: -1px; }
.cubeside { font: 700 19px "Open Sans", sans-serif; }
.cz, .cx { font: 27px "DejaVu Sans", sans-serif; fill: #00f; letter-spacing: 0; }
.cx { fill: #f00; }
.ax { font: 25px "DejaVu Sans", sans-serif; letter-spacing: 0; }
```
FILE: honeycomb.js
```js
// Builds the honeycomb solid from its lattice, projected to screen space.
const A0 = [326.3, 210.7], U = [78.4, 5], V = [30, 59.1];
const EL = [-42, 16.8], ER = [36.4, 21.8], ED = [-6.4, 37.3], EXT = [3, 23.9];
const add = (p, q, k = 1) => [p[0] + q[0] * k, p[1] + q[1] * k];
// Half of the wall thickness, towards the visible side of each wall direction
const HALF = { L: [0.85, 1.7], R: [-1.35, 1.55], D: [2.1, 0.13] };
const FACE = { L: '#99ff99', R: '#77ff77', D: '#44d944' };
const A = (i, j) => add(add(A0, U, i), V, j);
const B = (i, j) => add(A(i, j), EL);
const faces = [], tops = [];
const poly = (pts, fill) => `<polygon points="${pts.map(p => p.map(n => n.toFixed(1)).join()).join(' ')}" fill="${fill}"/>`;
function wall(p, q, kind, cap) {
  const h = HALF[kind], a = add(p, h), b = add(q, h);
  faces.push(poly([a, b, add(b, EXT), add(a, EXT)], FACE[kind]));
  if (cap) {
    const c = add(q, h, -1);
    faces.push(poly([c, b, add(b, EXT), add(c, EXT)], '#77ff77'));
  }
  tops.push(poly([a, b, add(q, h, -1), add(p, h, -1)], '#ccffcc'));
}
const rows = [[0, 0], [-1, 1], [-2, 2], [-1, 3], [0, 4], [1, 5], [2, 5], [3, 4]];
rows.forEach(([from, to], j) => {
  for (let i = from; i <= to; i++) {
    const a = A(i, j);
    if (i === j) wall(add(a, ED, -0.75), a, 'D');
    else wall(B(i + 1, j - 1), a, 'D');
  }
  if (j < 2) wall(add(B(from, j), ER, -0.96), B(from, j), 'R');
  for (let i = from; i <= to; i++) {
    const a = A(i, j);
    if (i === from && j > 1) wall(a, add(a, EL, 0.75), 'L', true);
    else wall(a, B(i, j), 'L');
    if (i === to && j > 5) wall(a, add(a, ER, 0.96), 'R', true);
    else wall(a, B(i + 1, j), 'R');
  }
  if (j < 6) wall(B(to + 1, j), add(B(to + 1, j), EL, -0.77), 'L');
  if (j > 1) wall(B(from + 1, j), add(B(from + 1, j), ED, 0.75), 'D', true);
});
document.getElementById('comb').innerHTML = faces.join('') + tops.join('');
```
